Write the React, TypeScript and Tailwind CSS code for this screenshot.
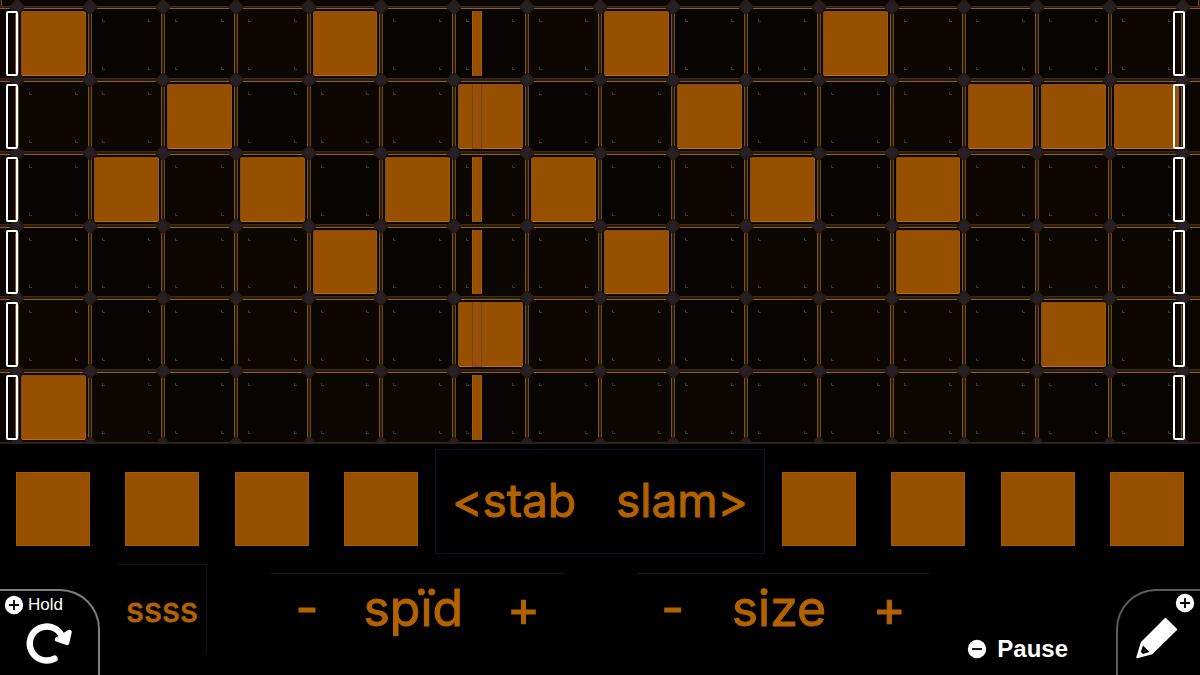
import { useState } from "react";

const COLUMNS = 16;
const PLAYHEAD_COLUMN = 6;

const PATTERN: number[][] = [
  [0, 4, 8, 11],
  [2, 6, 9, 13, 14, 15],
  [1, 3, 5, 7, 10, 12],
  [4, 8, 12],
  [6, 14],
  [0],
];

const GRID = "grid grid-cols-[17px_repeat(16,minmax(0,1fr))_17px] grid-rows-[7px_repeat(6,minmax(0,1fr))]";
const LABEL = "font-['Inter',sans-serif] [-webkit-text-stroke:1px_#b36200]";

function Joint({ bottom = false }: { bottom?: boolean }) {
  return (
    <span
      aria-hidden="true"
      className={`pointer-events-none absolute -left-1.5 z-10 size-3 rotate-45 rounded-xs border-2 border-[#2a1c10] bg-[#25202a] ${
        bottom ? "-bottom-1.5" : "-top-1.5"
      }`}
    />
  );
}

function Rivets() {
  const rivet = "absolute size-[3px] border-b border-l border-[#3a3026]";
  return (
    <>
      <span className={`${rivet} top-2.5 left-2.5`} />
      <span className={`${rivet} top-2.5 right-2.5`} />
      <span className={`${rivet} bottom-2 left-2.5`} />
      <span className={`${rivet} right-2.5 bottom-2`} />
    </>
  );
}

const FRAME =
  "relative block size-full rounded-xs border border-t-[#8a6026] border-r-[#805312] border-b-[#3a2a1c] border-l-[#66491f]";

function EdgeCell({ side, last }: { side: "left" | "right"; last: boolean }) {
  return (
    <div className="relative py-px">
      {side === "right" && <Joint />}
      {side === "right" && last && <Joint bottom />}
      <div className={side === "left" ? "h-full pr-px" : "h-full pl-px"}>
        <div
          className={`size-full border-t border-b border-t-[#8a6026] border-b-[#3a2a1c] bg-[#0c0603] ${
            side === "left" ? "border-r border-r-[#805312]" : "border-l border-l-[#66491f]"
          }`}
        />
      </div>
      <span
        className={`absolute top-1 bottom-1 z-20 w-3 rounded-xs border-2 border-white ${
          side === "left" ? "-right-px" : "-left-2.5"
        }`}
      />
    </div>
  );
}

function StripCell() {
  return (
    <div className="px-px">
      <div className="size-full border-x border-b border-x-[#66491f] border-b-[#3a2a1c] bg-[#0c0603]" />
    </div>
  );
}

function Board() {
  const [pattern, setPattern] = useState(PATTERN);

  const toggle = (row: number, column: number) =>
    setPattern((rows) =>
      rows.map((cells, index) =>
        index !== row ? cells : cells.includes(column) ? cells.filter((c) => c !== column) : [...cells, column],
      ),
    );

  return (
    <section aria-label="Sequencer" className={`h-[444px] overflow-hidden bg-[#2a1b0d] ${GRID}`}>
      {Array.from({ length: COLUMNS + 2 }, (_, i) => (
        <StripCell key={i} />
      ))}
      {pattern.map((cells, row) => {
        const last = row === pattern.length - 1;
        return [
          <EdgeCell key={`${row}-left`} side="left" last={last} />,
          ...Array.from({ length: COLUMNS }, (_, column) => {
            const active = cells.includes(column);
            return (
              <div key={`${row}-${column}`} className="relative p-px">
                <Joint />
                {last && <Joint bottom />}
                <button
                  type="button"
                  aria-pressed={active}
                  aria-label={`Row ${row + 1}, step ${column + 1}`}
                  onClick={() => toggle(row, column)}
                  className={`${FRAME} ${(row * 5 + column * 3) % 4 < 2 ? "bg-[#0d0703]" : "bg-[#080402]"}`}
                >
                  {active ? (
                    <span className="absolute inset-0.5 rounded-xs border border-t-[#8a4c18] border-r-[#9c5a16] border-b-[#c06c0c] border-l-[#854b20] bg-[#974f00]" />
                  ) : (
                    <Rivets />
                  )}
                </button>
                {column === PLAYHEAD_COLUMN && (
                  <span
                    className={`pointer-events-none absolute top-1 bottom-1 left-[18px] z-10 w-2.5 border-x ${
                      active ? "border-[#80430c] bg-[#994f0c]" : "border-[#a35a0c] bg-[#974f00]"
                    }`}
                  />
                )}
              </div>
            );
          }),
          <EdgeCell key={`${row}-right`} side="right" last={last} />,
        ];
      })}
    </section>
  );
}

function Pads({ start }: { start: number }) {
  return (
    <div className="flex flex-1 justify-between">
      {[0, 1, 2, 3].map((i) => (
        <button
          key={i}
          type="button"
          aria-label={`Pad ${start + i}`}
          className="size-[74px] border border-[#a35805] bg-[#974f00]"
        />
      ))}
    </div>
  );
}

function Stepper({ label }: { label: string }) {
  return (
    <div
      role="group"
      aria-label={label}
      className={`mt-[19px] flex h-[72px] flex-1 items-center justify-between border-t border-[#14161c] px-6 text-[50px] leading-[68px] ${LABEL}`}
    >
      <button type="button" aria-label={`Decrease ${label}`} className="w-6 pb-1">
        -
      </button>
      <span className="pb-1">{label}</span>
      <button type="button" aria-label={`Increase ${label}`} className="flex w-8 justify-center pb-1">
        +
      </button>
    </div>
  );
}

function ButtonGlyph({ sign }: { sign: "plus" | "minus" }) {
  return (
    <svg viewBox="0 0 20 20" className="size-5 shrink-0" aria-hidden="true">
      <circle cx="10" cy="10" r="9.2" fill="#fff" />
      <path
        d={sign === "plus" ? "M5 10H15M10 5V15" : "M5 10H15"}
        stroke="#000"
        strokeWidth="1.8"
        fill="none"
      />
    </svg>
  );
}

function RedoArrow() {
  return (
    <svg viewBox="0 0 50 48" className="h-12 w-[50px]" aria-hidden="true">
      <path d="M30.5 39.6A17 17 0 1 1 37.5 16" fill="none" stroke="#fff" strokeWidth="6.4" strokeLinecap="round" />
      <path d="M45.5 13L43 24L33 20.5Z" fill="#fff" stroke="#fff" strokeWidth="4.5" strokeLinejoin="round" />
    </svg>
  );
}

function Pencil() {
  return (
    <svg viewBox="0 0 44 44" className="size-11" aria-hidden="true">
      <path
        d="M2 41.5L6.5 26.5L30.5 2.5L41.5 13.5L17 37.5Z"
        fill="#fff"
        stroke="#fff"
        strokeWidth="1.5"
        strokeLinejoin="round"
      />
      <path d="M8 29.5L14.5 36L8 38L5.8 36Z" fill="#000" />
    </svg>
  );
}

export default function App() {
  return (
    <main className="flex min-h-screen flex-col bg-black font-['Liberation_Sans',Arial,sans-serif] text-[#b36200]">
      <Board />

      <section aria-label="Sounds" className="mt-[5px] flex items-center gap-[17px] px-4">
        <div className="flex flex-1 pt-[14px]">
          <Pads start={1} />
        </div>
        <div
          className={`flex h-[105px] w-[330px] items-center justify-between border border-[#0e1220] px-4 pb-1 text-[46px] leading-none ${LABEL}`}
        >
          <button type="button">&lt;stab</button>
          <button type="button">slam&gt;</button>
        </div>
        <div className="flex flex-1 pt-[14px]">
          <Pads start={5} />
        </div>
      </section>

      <footer className="flex h-[121px] items-start">
        <button
          type="button"
          className="flex h-[86px] w-[100px] shrink-0 flex-col self-end rounded-tr-[40px] border-t-2 border-r-2 border-[#7d7d7d] pt-1 pl-1 text-white"
        >
          <span className="flex items-center gap-1 text-[17px] leading-5">
            <ButtonGlyph sign="plus" />
            Hold
          </span>
          <span className="mt-1 ml-5">
            <RedoArrow />
          </span>
        </button>

        <button
          type="button"
          className={`mt-2.5 ml-[18px] h-[90px] w-[89px] border-t border-r border-[#101114] text-[34px] leading-[88px] ${LABEL}`}
        >
          ssss
        </button>

        <div className="ml-16 flex flex-1 gap-[73px]">
          <Stepper label="spïd" />
          <Stepper label="size" />
        </div>

        <button
          type="button"
          className="mt-[80px] ml-[38px] flex items-center gap-2.5 text-2xl leading-[30px] font-bold text-white"
        >
          <ButtonGlyph sign="minus" />
          Pause
        </button>

        <button
          type="button"
          aria-label="Edit"
          className="relative ml-12 flex h-[86px] w-[84px] shrink-0 items-start self-end rounded-tl-[40px] border-t-2 border-l-2 border-[#5a5a5a] pt-[25px] pl-[17px]"
        >
          <Pencil />
          <span className="absolute top-0.5 right-[5px]">
            <ButtonGlyph sign="plus" />
          </span>
        </button>
      </footer>
    </main>
  );
}
